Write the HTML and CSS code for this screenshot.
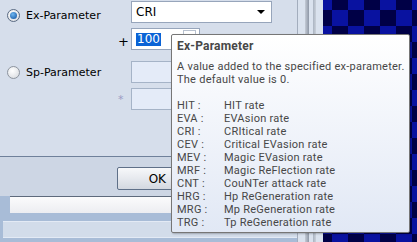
FILE: index.html
```html
<!DOCTYPE html>
<html lang="en">
<head>
    <meta charset="UTF-8">
    <title>Ex-Parameter</title>
    <link rel="stylesheet" href="styles.css">
</head>
<body>
<div class="screen">
    <div class="dialog">
        <div class="params">
            <div class="row row-ex">
                <label class="radio-label"><span class="radio checked"></span>Ex-Parameter</label>
                <span class="sign"></span>
                <div class="combo"><span>CRI</span><span class="combo-arrow"></span></div>
            </div>
            <div class="row row-add">
                <span class="radio-space"></span>
                <span class="sign">+</span>
                <div class="spin"><span class="sel">100</span><span class="spin-btn"></span></div>
            </div>
            <div class="row row-sp">
                <label class="radio-label"><span class="radio"></span>Sp-Parameter</label>
                <span class="sign"></span>
                <div class="field"></div>
            </div>
            <div class="row row-mul">
                <span class="radio-space"></span>
                <span class="sign disabled">*</span>
                <div class="field"></div>
            </div>
        </div>
        <div class="footer">
            <button class="ok">OK</button>
        </div>
        <div class="strip"><div class="strip-white"></div></div>
        <div class="panel"></div>
    </div>
    <div class="rail"><span class="rail-bar"></span><span class="rail-line"></span></div>
    <div class="checker"></div>

    <div class="tooltip">
        <div class="tip-title">Ex-Parameter</div>
        <p>A value added to the specified ex-parameter.<br>The default value is 0.</p>
        <dl class="tip-list">
            <dt>HIT :</dt><dd>HIT rate</dd>
            <dt>EVA :</dt><dd>EVAsion rate</dd>
            <dt>CRI :</dt><dd>CRItical rate</dd>
            <dt>CEV :</dt><dd>Critical EVasion rate</dd>
            <dt>MEV :</dt><dd>Magic EVasion rate</dd>
            <dt>MRF :</dt><dd>Magic ReFlection rate</dd>
            <dt>CNT :</dt><dd>CouNTer attack rate</dd>
            <dt>HRG :</dt><dd>Hp ReGeneration rate</dd>
            <dt>MRG :</dt><dd>Mp ReGeneration rate</dd>
            <dt>TRG :</dt><dd>Tp ReGeneration rate</dd>
        </dl>
    </div>
</div>
</body>
</html>
```

FILE: styles.css
```css
html, body {
    margin: 0;
    padding: 0;
}
body {
    width: 417px;
    height: 242px;
    overflow: hidden;
    font-family: "DejaVu Sans", sans-serif;
    font-size: 11px;
    color: #000;
}
.screen {
    position: relative;
    display: flex;
    width: 417px;
    height: 242px;
}
.dialog {
    width: 297px;
    display: flex;
    flex-direction: column;
    background-color: #d6deeb;
    border-right: 1px solid #a3adbd;
}
.params {
    height: 157px;
    padding-top: 1px;
    box-sizing: border-box;
    border-bottom: 1px solid #6f809a;
}
.row {
    display: flex;
    align-items: center;
    height: 22px;
}
.row-add {
    margin-top: 5px;
}
.row-sp {
    margin-top: 11px;
}
.row-mul {
    margin-top: 5px;
}
.radio-label, .radio-space {
    display: flex;
    align-items: center;
    width: 116px;
    padding-left: 7px;
    box-sizing: border-box;
}
.row-ex .radio-label {
    margin-top: 6px;
}
.radio {
    width: 11px;
    height: 11px;
    margin-right: 6px;
    border: 1px solid #8d949e;
    border-radius: 50%;
    background: radial-gradient(circle at 40% 35%, #ffffff, #d4d7dc);
    box-sizing: content-box;
    position: relative;
}
.radio.checked {
    border-color: #5a6b83;
}
.radio.checked::after {
    content: "";
    position: absolute;
    left: 2px;
    top: 2px;
    width: 7px;
    height: 7px;
    border-radius: 50%;
    background: radial-gradient(circle at 40% 35%, #6fb6f0, #0d4f9e);
}
.sign {
    width: 15px;
    font-size: 13px;
    padding-left: 2px;
    box-sizing: border-box;
}
.row-add .sign {
    margin-top: 4px;
}
.sign.disabled {
    color: #9c9cc4;
    font-size: 11px;
}
.combo {
    width: 141px;
    height: 22px;
    box-sizing: border-box;
    display: flex;
    align-items: center;
    justify-content: space-between;
    padding: 0 6px 0 4px;
    background-color: #fff;
    border: 1px solid #97a5bb;
    font-size: 12px;
}
.combo-arrow {
    width: 0;
    height: 0;
    border-left: 4px solid transparent;
    border-right: 4px solid transparent;
    border-top: 4px solid #000;
}
.spin {
    width: 69px;
    height: 22px;
    box-sizing: border-box;
    display: flex;
    align-items: center;
    justify-content: space-between;
    padding: 0 3px 0 4px;
    background-color: #fff;
    border: 1px solid #97a5bb;
    font-size: 12px;
}
.sel {
    background-color: #0a63d6;
    color: #fff;
    padding: 0 1px;
    line-height: 13px;
}
.spin-btn {
    width: 13px;
    height: 18px;
    border: 1px solid #b8c1cf;
    box-sizing: border-box;
}
.field {
    width: 141px;
    height: 22px;
    box-sizing: border-box;
    background-color: #e4ebf8;
    border: 1px solid #a5b3c7;
}
.footer {
    height: 39px;
    padding: 10px 0 0 117px;
    box-sizing: border-box;
    background-color: #cdd6e4;
}
.ok {
    width: 72px;
    height: 23px;
    font-family: "DejaVu Sans", sans-serif;
    font-size: 12px;
    color: #000;
    text-align: right;
    padding: 0 22px 0 0;
    border: 1px solid #5f7088;
    border-radius: 2px;
    background: linear-gradient(#f7f8fa, #e6e9ee 50%, #d3d8e0);
}
.strip {
    height: 17px;
    padding-left: 10px;
    background-color: #a8bcd7;
}
.strip-white {
    height: 16px;
    border-top: 1px solid #5e6a7c;
    background: linear-gradient(#fbfbfc, #ecedf1);
}
.panel {
    flex: 1;
    background-color: #a8bcd7;
    border-top: 7px solid #a8bcd7;
    position: relative;
}
.panel::before {
    content: "";
    position: absolute;
    left: 3px;
    right: 0;
    top: 1px;
    bottom: 4px;
    border-top: 1px solid #e3eaf5;
    border-bottom: 1px solid #e3eaf5;
    background-color: #d2dcea;
}
.rail {
    width: 25px;
    display: flex;
    background-color: #dae2ee;
}
.rail-bar {
    margin-left: 7px;
    width: 4px;
    background: linear-gradient(90deg, #c4cbd6, #8e97a6);
}
.rail-line {
    margin-left: 4px;
    width: 3px;
    background: linear-gradient(90deg, #aab3c1, #c9d0da);
}
.checker {
    flex: 1;
    background-color: #07097a;
    background-image: conic-gradient(#000046 25%, #0912a0 0 50%, #000046 0 75%, #0912a0 0);
    background-size: 32px 32px;
    background-position: -7px -6px;
}
.tooltip {
    position: absolute;
    left: 171px;
    top: 34px;
    width: 239px;
    height: 199px;
    box-sizing: border-box;
    padding: 5px 5px 0 5px;
    border: 1px solid #767676;
    border-radius: 2px;
    background: linear-gradient(#ffffff, #e1e8f5);
    box-shadow: 1px 1px 2px rgba(0, 0, 0, 0.25);
    font-family: Roboto, sans-serif;
    font-size: 11px;
    line-height: 13px;
    letter-spacing: 0.25px;
    white-space: nowrap;
    color: #474747;
}
.tip-title {
    font-weight: bold;
    font-size: 12px;
    letter-spacing: 0.2px;
}
.tooltip p {
    margin: 7px 0 13px 0;
}
.tip-list {
    display: grid;
    grid-template-columns: 47px auto;
    margin: 0;
}
.tip-list dd {
    margin: 0;
}
```
